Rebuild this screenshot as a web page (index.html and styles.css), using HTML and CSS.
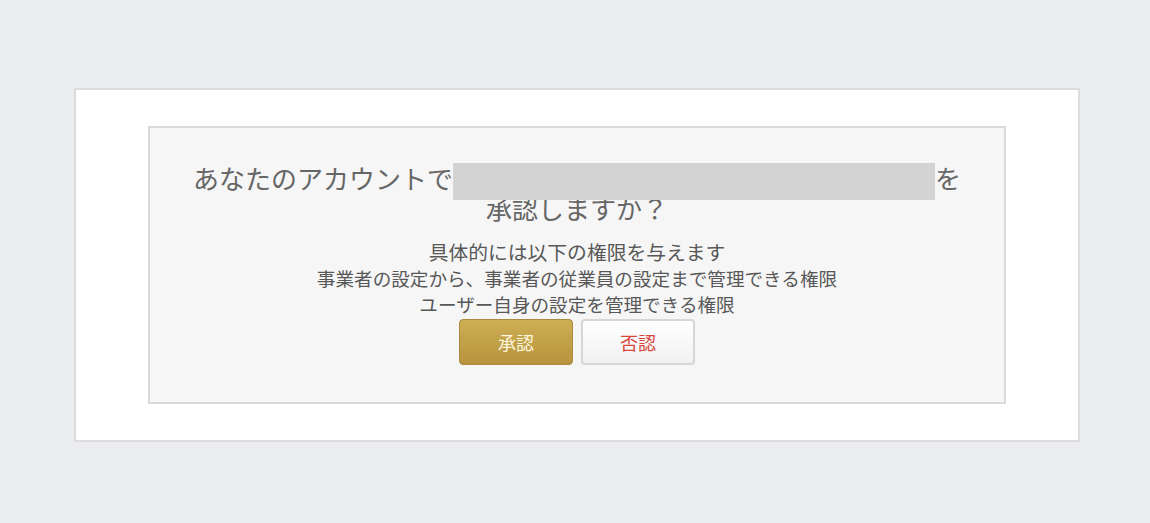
FILE: index.html
```html
<!DOCTYPE html>
<html>

<head>
    <meta charset="utf-8">
    <title>アカウント連携の承認</title>
    <link rel="stylesheet" href="styles.css">
</head>

<body>
    <div class="page">
        <div class="card">
            <div class="consent">
                <p class="consent-title">
                    あなたのアカウントで<span class="client-name"></span>を<br>承認しますか？
                </p>
                <div class="scopes">
                    <p class="scopes-lead">具体的には以下の権限を与えます</p>
                    <p>事業者の設定から、事業者の従業員の設定まで管理できる権限</p>
                    <p>ユーザー自身の設定を管理できる権限</p>
                </div>
                <div class="actions">
                    <button class="btn btn-approve" type="button">承認</button>
                    <button class="btn btn-deny" type="button">否認</button>
                </div>
            </div>
        </div>
    </div>
</body>

</html>
```

FILE: styles.css
```css
* {
    margin: 0;
    padding: 0;
    box-sizing: border-box;
}

html,
body {
    height: 100%;
}

body {
    background-color: #ecedf1;
    font-family: "Noto Sans CJK JP", "Noto Sans", sans-serif;
    color: #666;
}

.page {
    padding: 88px 70px 0 74px;
}

.card {
    width: 1006px;
    height: 354px;
    background-color: #fff;
    border: 2px solid #dcdcdc;
    padding: 36px 72px;
}

.consent {
    height: 100%;
    background-color: #f6f6f6;
    border: 2px solid #dadada;
    padding: 35px 0 0;
    text-align: center;
}

.consent-title {
    font-size: 26px;
    line-height: 30px;
    color: #666;
}

/* the client name is masked out */
.client-name {
    position: relative;
    display: inline-block;
    width: 482px;
    height: 37px;
    margin-bottom: -7px;
    vertical-align: top;
    background-color: #d3d3d3;
}

.scopes {
    margin-top: 16px;
    font-size: 18.6px;
    line-height: 26px;
    color: #585858;
}

.scopes-lead {
    font-size: 19.8px;
}

.actions {
    display: flex;
    justify-content: center;
    gap: 8px;
    margin-top: 2px;
}

.btn {
    width: 114px;
    height: 46px;
    border-radius: 4px;
    font-family: inherit;
    font-size: 18px;
    cursor: pointer;
}

.btn-approve {
    color: #fff6de;
    background: linear-gradient(#cdaf55, #b7933c);
    border: 1px solid #a98a3e;
}

.btn-deny {
    color: #d8473d;
    background: linear-gradient(#fff, #f1f1f1);
    border: 2px solid #d6d6d6;
}
```
